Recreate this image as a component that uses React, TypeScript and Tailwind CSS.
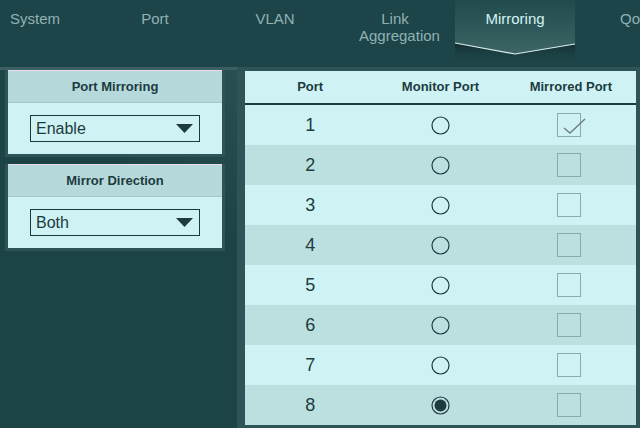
import { type ReactNode } from 'react'

const NAV = ['System', 'Port', 'VLAN', 'Link Aggregation', 'Mirroring', 'QoS']
const PORTS = [1, 2, 3, 4, 5, 6, 7, 8]

/* ── Nav tab ─────────────────────────────────────── */
function NavItem({ label, active }: { label: string; active?: boolean }) {
  if (active) {
    return (
      <div className="relative w-[120px] h-[67px] shrink-0 text-center">
        <svg className="absolute left-0 top-0" width="120" height="66" viewBox="0 0 120 66">
          <defs>
            <linearGradient id="tabg" x1="0" y1="0" x2="0" y2="1">
              <stop offset="0" stopColor="#214a4d" />
              <stop offset="1" stopColor="#3d6566" />
            </linearGradient>
            <linearGradient id="tabs" x1="0" y1="0" x2="0" y2="1">
              <stop offset="0" stopColor="#10292b" stopOpacity="0.9" />
              <stop offset="1" stopColor="#1d4448" stopOpacity="0" />
            </linearGradient>
          </defs>
          <polygon points="0,43 60,54 120,44 120,62 0,62" fill="url(#tabs)" />
          <polygon points="0,0 120,0 120,44 60,54 0,43" fill="url(#tabg)" />
          <polyline points="0,43 60,54 120,44" fill="none" stroke="#dbeeee" strokeWidth="1.2" />
        </svg>
        <div className="relative pt-[10px] text-[15px] leading-[17px] text-[#d4f3f3]">{label}</div>
      </div>
    )
  }
  return (
    <div className="w-[120px] h-[67px] shrink-0 text-center pt-[10px] text-[15px] leading-[17px] text-[#8fb2b4] px-6">
      {label}
    </div>
  )
}

/* ── Left side panel ─────────────────────────────── */
function SidePanel({ title, value }: { title: string; value: string }) {
  return (
    <div className="w-[220px] bg-[#2f5457] px-[3px] pb-[3px]">
      <div className="border-t border-[#f1d9ec]">
        <div className="h-[32px] bg-[#b6d9db] flex items-center justify-center text-[13px] font-bold text-[#1c3b3e] border-b border-[#a6c8ca]">
          {title}
        </div>
        <div className="h-[51px] bg-[#cff2f4] flex items-center justify-center">
          <div className="w-[170px] h-[27px] border border-[#1a3a3c] flex items-center justify-between pl-[5px] pr-[6px]">
            <span className="text-[16px] text-[#1c3b3e]">{value}</span>
            <svg width="17" height="9" viewBox="0 0 17 9"><polygon points="0,0 17,0 8.5,9" fill="#1c3b3e" /></svg>
          </div>
        </div>
      </div>
    </div>
  )
}

function Radio({ checked }: { checked?: boolean }) {
  return (
    <svg width="19" height="19" viewBox="0 0 19 19">
      <circle cx="9.5" cy="9.5" r="8.5" fill="none" stroke="#1d3c3f" strokeWidth="1.2" />
      {checked && <circle cx="9.5" cy="9.5" r="6" fill="#1d3c3f" />}
    </svg>
  )
}

function Check({ checked }: { checked?: boolean }) {
  return (
    <div className="relative w-[24px] h-[24px] border border-[#8ea9aa] -ml-[4px]">
      {checked && (
        <svg className="absolute left-0 top-0 overflow-visible" width="24" height="24" viewBox="0 0 24 24">
          <polyline points="6,14 12,19 27,5" fill="none" stroke="#6b7f80" strokeWidth="1.4" />
        </svg>
      )}
    </div>
  )
}

function Cell({ children }: { children: ReactNode }) {
  return <div className="flex items-center justify-center">{children}</div>
}

export default function App() {
  return (
    <div className="w-[640px] h-[428px] overflow-hidden bg-[linear-gradient(to_top_right,#1c4447_40%,#41656a)] font-[family-name:'Liberation_Sans',Arial,sans-serif]">
      {/* top navigation */}
      <div className="h-[70px] bg-[#1d4448] border-b-[3px] border-[#3b5f62] flex -ml-[25px] overflow-hidden">
        {NAV.map(n => <NavItem key={n} label={n} active={n === 'Mirroring'} />)}
      </div>

      <div className="flex">
        <div className="pl-[5px] flex flex-col gap-[7px]">
          <SidePanel title="Port Mirroring" value="Enable" />
          <SidePanel title="Mirror Direction" value="Both" />
        </div>

        {/* ports table */}
        <div className="ml-[12px] -mt-[3px] bg-[#2f5457] pl-[8px] pr-[4px] pt-[4px] pb-[3px]">
          <div className="w-[391px]">
            <div className="grid grid-cols-3 h-[34px] bg-[#cff3f5] border-b-2 border-[#1d3c3f] text-[13px] font-bold text-[#1c3b3e]">
              <Cell>Port</Cell>
              <Cell>Monitor Port</Cell>
              <Cell>Mirrored Port</Cell>
            </div>
            {PORTS.map(p => (
              <div key={p} className={`grid grid-cols-3 h-[40px] ${p % 2 === 1 ? 'bg-[#cff2f4]' : 'bg-[#bcdfe0]'}`}>
                <Cell><span className="text-[18px] text-[#1d3c3f]">{p}</span></Cell>
                <Cell><Radio checked={p === 8} /></Cell>
                <Cell><Check checked={p === 1} /></Cell>
              </div>
            ))}
          </div>
        </div>
      </div>
    </div>
  )
}
